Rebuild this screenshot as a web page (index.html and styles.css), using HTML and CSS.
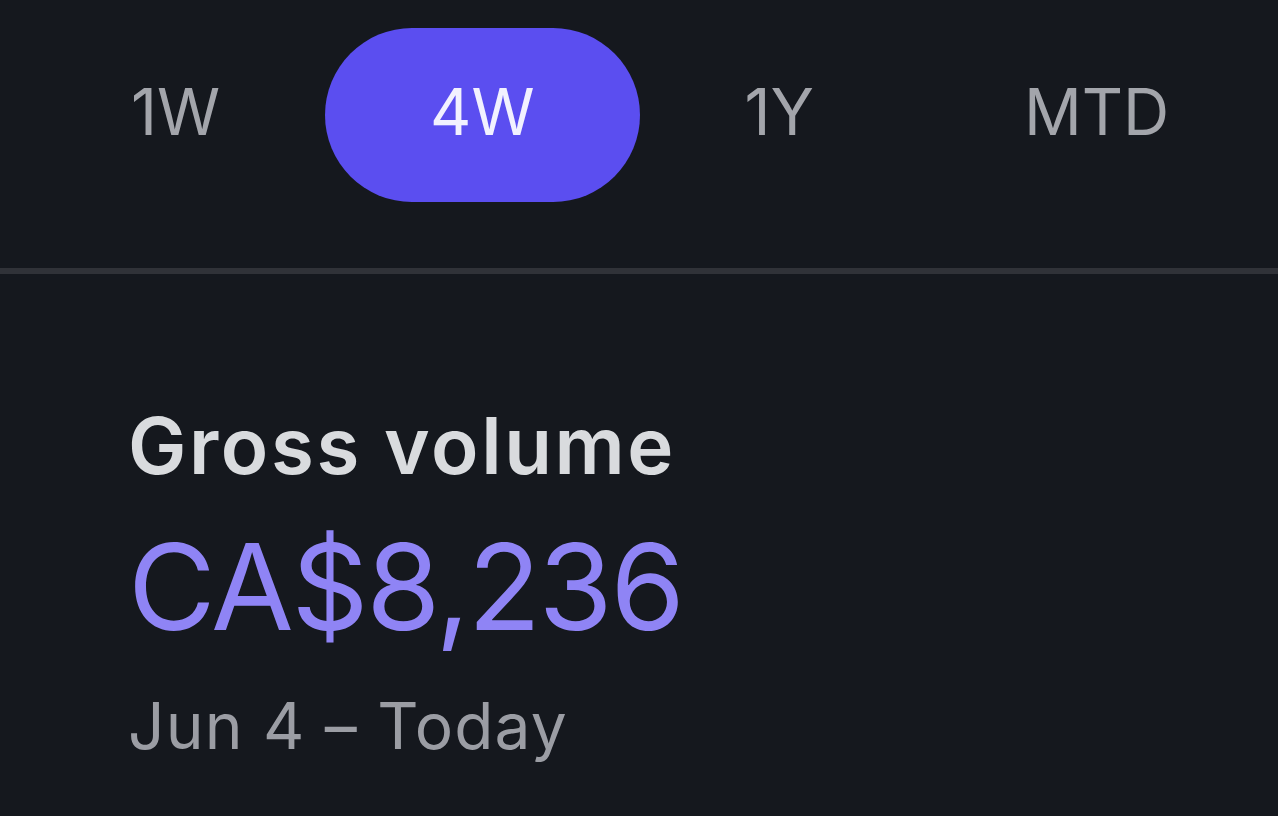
FILE: index.html
```html
<!DOCTYPE html>
<html>
<head>
<meta charset="utf-8">
<link rel="stylesheet" href="styles.css">
</head>
<body>
<div class="screen">
  <nav class="tabs">
    <div class="tab">1W</div>
    <div class="tab active">4W</div>
    <div class="tab">1Y</div>
    <div class="tab">MTD</div>
  </nav>
  <div class="divider"></div>
  <section class="summary">
    <div class="label">Gross volume</div>
    <div class="amount">CA$8,236</div>
    <div class="range">Jun 4 – Today</div>
  </section>
</div>
</body>
</html>
```
FILE: styles.css
```css
html, body {
  margin: 0;
  padding: 0;
  background: #15181e;
}
body {
  width: 1278px;
  height: 816px;
  overflow: hidden;
  font-family: Inter, "Noto Sans", sans-serif;
}
.screen {
  display: flex;
  flex-direction: column;
}
.tabs {
  display: flex;
  align-items: center;
  padding: 28px 0 0 26px;
  height: 174px;
}
.tab {
  box-sizing: border-box;
  height: 174px;
  padding: 0 105px 7px;
  display: flex;
  align-items: center;
  justify-content: center;
  font-size: 64px;
  color: #a3a5ab;
  border-radius: 87px;
}
.tab.active {
  background: #5b4ef0;
  color: #f2f1ff;
}
.divider {
  margin-top: 66px;
  height: 6px;
  background: #303238;
}
.summary {
  padding: 0 0 0 128px;
  display: flex;
  flex-direction: column;
}
.label {
  margin-top: 133px;
  font-size: 78px;
  font-weight: 600;
  color: #d9dbde;
  line-height: 1;
  letter-spacing: 2.6px;
}
.amount {
  margin-top: 42px;
  font-size: 120px;
  color: #8f84f5;
  line-height: 1;
  letter-spacing: -2.3px;
}
.range {
  margin-top: 47px;
  font-size: 64px;
  color: #9b9da4;
  line-height: 1;
  letter-spacing: 1.2px;
}
```
